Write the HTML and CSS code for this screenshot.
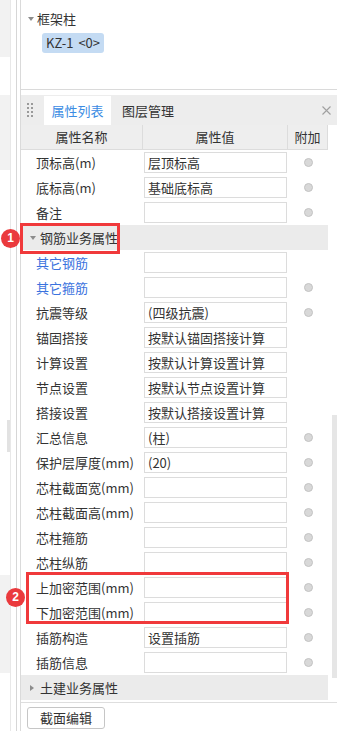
FILE: index.html
```html
<!DOCTYPE html>
<html lang="zh-CN">
<head>
    <meta charset="UTF-8">
    <meta name="viewport" content="width=device-width, initial-scale=1.0">
    <title>属性列表</title>
    <link rel="stylesheet" href="styles.css">
</head>
<body>
<div class="app">
    <!-- left edge of the neighbouring panel -->
    <aside class="side">
        <div class="rail">
            <span class="rail-block r1"></span>
            <span class="rail-gap g1"></span>
            <span class="rail-block r2"></span>
            <span class="rail-gap g2"></span>
            <span class="rail-thumb"></span>
            <span class="rail-gap g3"></span>
            <span class="rail-block r3"></span>
        </div>
        <div class="rail-line"></div>
        <div class="side-line"></div>
    </aside>

    <main class="main">
        <!-- component tree -->
        <section class="tree">
            <div class="tree-node"><span class="caret down"></span>框架柱</div>
            <div class="chip">KZ-1 &lt;0&gt;</div>
        </section>

        <!-- property panel -->
        <section class="props">
            <div class="tabs">
                <svg class="grip" width="6" height="14" viewBox="0 0 6 14">
                    <g fill="#9a9a9a">
                        <rect x="0" y="0" width="2" height="2"/><rect x="4" y="0" width="2" height="2"/>
                        <rect x="0" y="4" width="2" height="2"/><rect x="4" y="4" width="2" height="2"/>
                        <rect x="0" y="8" width="2" height="2"/><rect x="4" y="8" width="2" height="2"/>
                        <rect x="0" y="12" width="2" height="2"/><rect x="4" y="12" width="2" height="2"/>
                    </g>
                </svg>
                <span class="tab active">属性列表</span>
                <span class="tab">图层管理</span>
                <svg class="close" width="9" height="9" viewBox="0 0 9 9">
                    <path d="M0.5 0.5L8.5 8.5M8.5 0.5L0.5 8.5" stroke="#a0a0a0" stroke-width="1.1" fill="none"/>
                </svg>
            </div>

            <div class="body">
                <div class="table">
                    <div class="row head">
                        <div class="hcell">属性名称</div>
                        <div class="hcell">属性值</div>
                        <div class="hcell">附加</div>
                    </div>

                    <div class="row"><div class="name">顶标高(m)</div><div class="val"><span class="box">层顶标高</span></div><div class="add"><span class="radio"></span></div></div>
                    <div class="row"><div class="name">底标高(m)</div><div class="val"><span class="box">基础底标高</span></div><div class="add"><span class="radio"></span></div></div>
                    <div class="row"><div class="name">备注</div><div class="val"><span class="box"></span></div><div class="add"><span class="radio"></span></div></div>

                    <div class="group"><span class="caret down"></span>钢筋业务属性</div>

                    <div class="row"><div class="name link">其它钢筋</div><div class="val"><span class="box"></span></div><div class="add"></div></div>
                    <div class="row"><div class="name link">其它箍筋</div><div class="val"><span class="box"></span></div><div class="add"><span class="radio"></span></div></div>
                    <div class="row"><div class="name">抗震等级</div><div class="val"><span class="box">(四级抗震)</span></div><div class="add"><span class="radio"></span></div></div>
                    <div class="row"><div class="name">锚固搭接</div><div class="val"><span class="box">按默认锚固搭接计算</span></div><div class="add"></div></div>
                    <div class="row"><div class="name">计算设置</div><div class="val"><span class="box">按默认计算设置计算</span></div><div class="add"></div></div>
                    <div class="row"><div class="name">节点设置</div><div class="val"><span class="box">按默认节点设置计算</span></div><div class="add"></div></div>
                    <div class="row"><div class="name">搭接设置</div><div class="val"><span class="box">按默认搭接设置计算</span></div><div class="add"></div></div>
                    <div class="row"><div class="name">汇总信息</div><div class="val"><span class="box">(柱)</span></div><div class="add"><span class="radio"></span></div></div>
                    <div class="row"><div class="name">保护层厚度(mm)</div><div class="val"><span class="box">(20)</span></div><div class="add"><span class="radio"></span></div></div>
                    <div class="row"><div class="name">芯柱截面宽(mm)</div><div class="val"><span class="box"></span></div><div class="add"><span class="radio"></span></div></div>
                    <div class="row"><div class="name">芯柱截面高(mm)</div><div class="val"><span class="box"></span></div><div class="add"><span class="radio"></span></div></div>
                    <div class="row"><div class="name">芯柱箍筋</div><div class="val"><span class="box"></span></div><div class="add"><span class="radio"></span></div></div>
                    <div class="row"><div class="name">芯柱纵筋</div><div class="val"><span class="box"></span></div><div class="add"><span class="radio"></span></div></div>
                    <div class="row"><div class="name">上加密范围(mm)</div><div class="val"><span class="box"></span></div><div class="add"><span class="radio"></span></div></div>
                    <div class="row"><div class="name">下加密范围(mm)</div><div class="val"><span class="box"></span></div><div class="add"><span class="radio"></span></div></div>
                    <div class="row"><div class="name">插筋构造</div><div class="val"><span class="box">设置插筋</span></div><div class="add"><span class="radio"></span></div></div>
                    <div class="row"><div class="name">插筋信息</div><div class="val"><span class="box"></span></div><div class="add"><span class="radio"></span></div></div>

                    <div class="group"><span class="caret right"></span>土建业务属性</div>
                </div>
                <div class="scrollbar"><span class="thumb"></span></div>
            </div>

            <div class="footer">
                <button class="btn">截面编辑</button>
            </div>
        </section>
    </main>

    <!-- red annotations -->
    <div class="mark mark-1"></div>
    <span class="badge badge-1">1</span>
    <div class="mark mark-2"></div>
    <span class="badge badge-2">2</span>
</div>
</body>
</html>
```

FILE: styles.css
```css
* {
    box-sizing: border-box;
}

body {
    margin: 0;
    background: #fff;
    font-family: "Noto Sans CJK SC", "Noto Sans", sans-serif;
    font-size: 13px;
    color: #333;
}

.app {
    position: relative;
    display: flex;
    width: 337px;
    height: 731px;
    overflow: hidden;
}

/* Left strip */
.side {
    display: flex;
    width: 20px;
    flex-shrink: 0;
}

.rail {
    display: flex;
    flex-direction: column;
    width: 10px;
}

.rail-block {
    display: block;
    background: #f2f2f2;
}
.r1 { height: 57px; }
.r2 { height: 75px; }
.r3 { height: 98px; }

.rail-gap { display: block; }
.g1 { height: 38px; }
.g2 { height: 250px; }
.g3 { height: 123px; }

.rail-thumb {
    display: block;
    height: 32px;
    width: 3px;
    margin-left: 7px;
    background: #e2e2e2;
}

.rail-line {
    width: 1px;
    background: #e8e8e8;
}

.side-line {
    width: 1px;
    margin-left: 5px;
    background: #d6d6d6;
}

/* Main column */
.main {
    flex: 1;
    display: flex;
    flex-direction: column;
    border-left: 1px solid #dadada;
}

.tree {
    height: 90px;
    padding: 10px 0 0 6px;
    border-bottom: 1px solid #dadada;
}

.tree-node {
    display: flex;
    align-items: center;
    height: 18px;
    line-height: 18px;
}

.caret {
    display: inline-block;
    width: 0;
    height: 0;
}

.caret.down {
    border-left: 3px solid transparent;
    border-right: 3px solid transparent;
    border-top: 4px solid #8c8c8c;
    margin-right: 4px;
}

.caret.right {
    border-top: 3px solid transparent;
    border-bottom: 3px solid transparent;
    border-left: 4px solid #8c8c8c;
    margin-right: 6px;
}

.tree .caret.down {
    margin-left: 1px;
    margin-right: 3px;
}

.chip {
    display: inline-block;
    align-self: flex-start;
    height: 20px;
    line-height: 20px;
    margin: 5px 0 0 15px;
    padding: 0 4px;
    background: #c4dbf3;
    border-radius: 3px;
    word-spacing: 2px;
}

/* Property panel */
.props {
    display: flex;
    flex-direction: column;
    margin-top: 5px;
    flex: 1;
}

.tabs {
    display: flex;
    align-items: center;
    height: 30px;
    padding-left: 6px;
    background: #ededed;
}

.grip {
    margin-right: 11px;
}

.tab {
    height: 29px;
    margin-top: 1px;
    line-height: 29px;
    padding: 0 8px;
}

.tab + .tab {
    margin-left: 3px;
}

.tab.active {
    width: 67px;
    text-align: center;
    padding: 0;
    background: #fff;
    color: #3b8ce3;
}

.close {
    margin-left: auto;
    margin-right: 6px;
}

.body {
    display: flex;
}

.table {
    width: 307px;
}

.row {
    display: grid;
    grid-template-columns: 122px 145px 40px;
    height: 25px;
    align-items: center;
}

.row.head {
    background: #eeeeee;
    border-bottom: 1px solid #dcdcdc;
    align-items: stretch;
}

.hcell {
    line-height: 24px;
    text-align: center;
    border-right: 1px solid #dcdcdc;
}

.name {
    padding-left: 15px;
    white-space: nowrap;
}

.name.link {
    color: #3a72de;
}

.val {
    padding-left: 1px;
}

.box {
    display: block;
    width: 143px;
    height: 21px;
    line-height: 19px;
    padding-left: 3px;
    border: 1px solid #dcdcdc;
    background: #fff;
    white-space: nowrap;
    overflow: hidden;
}

.add {
    display: flex;
    justify-content: center;
    align-items: center;
}

.radio {
    display: block;
    width: 9px;
    height: 9px;
    border-radius: 50%;
    background: #d8d8d8;
    border: 1px solid #c3c3c3;
}

.group {
    display: flex;
    align-items: center;
    height: 25px;
    padding-left: 9px;
    background: #ebebeb;
}

.scrollbar {
    width: 9px;
    padding: 290px 0 0 4px;
}

.thumb {
    display: block;
    width: 5px;
    height: 263px;
    background: #e6e6e6;
}

.footer {
    margin-top: 2px;
    padding: 4px 0 0 6px;
    border-top: 1px solid #dedede;
}

.btn {
    width: 78px;
    height: 22px;
    padding: 0;
    font-family: inherit;
    font-size: 13px;
    line-height: 20px;
    color: #333;
    background: #fff;
    border: 1px solid #c6c6c6;
    border-radius: 3px;
}

/* Annotations */
.mark {
    position: absolute;
    border: 3px solid #f0393b;
}

.mark-1 {
    left: 20px;
    top: 223px;
    width: 100px;
    height: 31px;
}

.mark-2 {
    left: 26px;
    top: 572px;
    width: 263px;
    height: 52px;
}

.badge {
    position: absolute;
    width: 19px;
    height: 19px;
    border-radius: 50%;
    background: #ea3a3d;
    color: #fff;
    font-family: "Liberation Sans", sans-serif;
    font-weight: bold;
    font-size: 12px;
    line-height: 19px;
    text-align: center;
}

.badge-1 {
    left: 1px;
    top: 229px;
}

.badge-2 {
    left: 6px;
    top: 588px;
}
```
